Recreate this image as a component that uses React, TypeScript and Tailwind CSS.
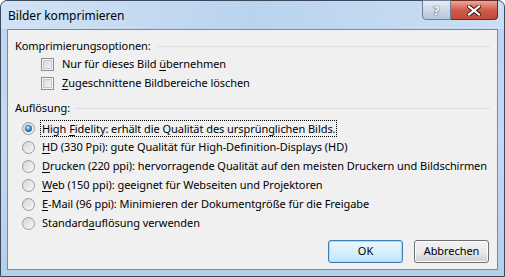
import React from 'react'

const font = { fontFamily: '"Noto Sans", "Open Sans", sans-serif' }

function CheckBox() {
  return (
    <span className="inline-block w-[13px] h-[13px] border border-[#8e8f8f] bg-[#f4f4f4] p-[1px]">
      <span className="block w-full h-full border border-[#c8c8c8] bg-gradient-to-br from-[#d9d9d9] to-[#f4f4f4]" />
    </span>
  )
}

function Radio({ checked }: { checked?: boolean }) {
  return (
    <svg width="13" height="13" viewBox="0 0 13 13" className="shrink-0">
      <defs>
        <linearGradient id="rbg" x1="0" y1="0" x2="1" y2="1">
          <stop offset="0" stopColor="#d4d4d4" />
          <stop offset="1" stopColor="#fafafa" />
        </linearGradient>
        <radialGradient id="rdot" cx="0.4" cy="0.35" r="0.7">
          <stop offset="0" stopColor="#e6f5ff" />
          <stop offset="0.45" stopColor="#47a9e8" />
          <stop offset="1" stopColor="#0e5ca5" />
        </radialGradient>
      </defs>
      <circle cx="6.5" cy="6.5" r="6" fill="url(#rbg)" stroke="#9c9c9c" strokeWidth="1" />
      {checked && <circle cx="6.5" cy="6.5" r="3.2" fill="url(#rdot)" stroke="#1b4f86" strokeWidth="0.6" />}
    </svg>
  )
}

function U({ children }: { children: React.ReactNode }) {
  return <span className="underline underline-offset-[2px]">{children}</span>
}

function GroupHeader({ label }: { label: string }) {
  return (
    <div className="flex items-center gap-[6px] h-[16px]">
      <span>{label}</span>
      <span className="flex-1 h-px bg-[#d5dfe5]" />
    </div>
  )
}

const radios: { node: React.ReactNode; checked?: boolean }[] = [
  { node: <>High <U>F</U>idelity: erhält die Qualität des ursprünglichen Bilds.</>, checked: true },
  { node: <><U>H</U>D (330 Ppi): gute Qualität für High-Definition-Displays (HD)</> },
  { node: <><U>D</U>rucken (220 ppi): hervorragende Qualität auf den meisten Druckern und Bildschirmen</> },
  { node: <><U>W</U>eb (150 ppi): geeignet für Webseiten und Projektoren</> },
  { node: <><U>E</U>-Mail (96 ppi): Minimieren der Dokumentgröße für die Freigabe</> },
  { node: <>Standard<U>a</U>uflösung verwenden</> },
]

export default function App() {
  return (
    <div className="w-[505px] h-[277px] text-[11px] tracking-[-0.06px] text-black whitespace-nowrap" style={font}>
      <div className="relative w-[505px] h-[277px] rounded-t-[7px] border border-[#3d4a5c] bg-gradient-to-b from-[#bcd4ee] via-[#c4daf2] to-[#b6cfe9] flex flex-col">
        <div className="absolute inset-x-0 top-0 h-[28px] rounded-t-[7px] bg-gradient-to-r from-[#d7e6f6] via-[#b9d3ef] to-[#cde1f5] opacity-80" />
        <div className="relative h-[28px] flex items-start">
          <span className="mt-[6px] ml-[7px] text-[12px] tracking-normal text-black">Bilder komprimieren</span>
          <div className="ml-auto mr-[6px] flex h-[20px] -mt-px">
            <div className="w-[29px] h-[20px] rounded-bl-[4px] border border-[#6f7e92] bg-gradient-to-b from-[#e6edf6] via-[#cdd9e7] to-[#b3c4d8] flex items-center justify-center">
              <span className="text-[13px] font-bold leading-none text-[#f2f5f8] [text-shadow:0_0_1px_#3c4858,0_0_1px_#3c4858]" style={{ fontFamily: '"DejaVu Sans", sans-serif' }}>?</span>
            </div>
            <div className="w-[47px] h-[20px] rounded-br-[4px] border border-l-0 border-[#6b2a22] bg-gradient-to-b from-[#e9a99c] via-[#d2594a] to-[#c14a3a] flex items-center justify-center">
              <svg width="14" height="11" viewBox="0 0 14 11">
                <path d="M2 1.5 L12 9.5 M12 1.5 L2 9.5" stroke="#3b1a16" strokeWidth="4.2" strokeLinecap="square" />
                <path d="M2 1.5 L12 9.5 M12 1.5 L2 9.5" stroke="#ffffff" strokeWidth="2.2" strokeLinecap="square" />
              </svg>
            </div>
          </div>
        </div>
        <div className="ml-[6px] w-[491px] h-[241px] border border-[#7a8a9c] bg-[#f0f0f0] pl-[7px] pr-[7px] pt-[8px]">
          <GroupHeader label="Komprimierungsoptionen:" />
          <div className="pl-[26px] mt-[4px] flex flex-col gap-[6px]">
            <label className="flex items-center gap-[8px] h-[13px]">
              <CheckBox />
              <span>Nur für dieses Bild <U>ü</U>bernehmen</span>
            </label>
            <label className="flex items-center gap-[8px] h-[13px]">
              <CheckBox />
              <span><U>Z</U>ugeschnittene Bildbereiche löschen</span>
            </label>
          </div>
          <div className="mt-[10px]">
            <GroupHeader label="Auflösung:" />
          </div>
          <div className="pl-[7px] mt-[3px] flex flex-col">
            {radios.map((r, i) => (
              <div key={i} className="flex items-center gap-[6px] h-[19px]">
                <Radio checked={r.checked} />
                <span className={r.checked ? 'px-px leading-[15px] outline outline-1 outline-dotted outline-black' : 'px-px'}>{r.node}</span>
              </div>
            ))}
          </div>
          <div className="flex justify-end gap-[11px] mt-[7px] pr-[1px]">
            <button className="w-[75px] h-[23px] rounded-[3px] border border-[#3c7fb1] bg-gradient-to-b from-[#eaf6fd] via-[#d9f0fc] to-[#bee6fd] shadow-[inset_0_0_0_1px_#a7d9f5]">OK</button>
            <button className="w-[75px] h-[23px] rounded-[3px] border border-[#707070] bg-gradient-to-b from-[#f2f2f2] via-[#ebebeb] to-[#cfcfcf] shadow-[inset_0_0_0_1px_#fcfcfc]">Abbrechen</button>
          </div>
        </div>
      </div>
    </div>
  )
}
